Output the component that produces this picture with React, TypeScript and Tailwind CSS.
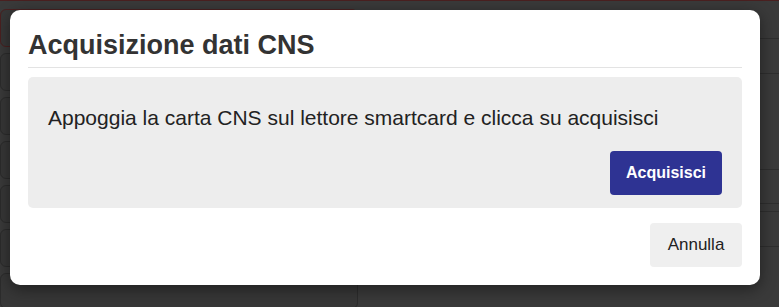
import React from 'react';

const leftRows = [
  { h: 'h-[38px]', border: 'border-[#4a2020]' },
  { h: 'h-[38px]', border: 'border-[#2c2c2c]' },
  { h: 'h-[38px]', border: 'border-[#2c2c2c]' },
  { h: 'h-[38px]', border: 'border-[#2c2c2c]' },
  { h: 'h-[38px]', border: 'border-[#2c2c2c]' },
  { h: 'h-[38px]', border: 'border-[#2c2c2c]' },
];

function Backdrop() {
  return (
    <div className="flex h-full w-full flex-col bg-[#3a3a3a] text-[#1c1c1c]">
      {/* top row of the form behind the modal */}
      <div className="flex h-[13px] items-end overflow-hidden border-b border-[#4a2020] bg-[#333]">
        <div className="flex h-[36px] w-[322px] items-end pb-[4px] pl-[12px] text-[22px] leading-[28px]">
          Rossi
        </div>
        <div className="flex h-[36px] w-[36px] items-end justify-center border-x border-[#4a2020] pb-[4px]">
          <div className="h-[10px] w-[20px] rounded-[2px] bg-[#111]" />
        </div>
        <div className="flex h-[36px] w-[179px] items-end justify-end pb-[4px] pr-[16px] text-[22px] leading-[28px]">
          Nome
        </div>
        <div className="flex h-[36px] flex-1 items-end border-l border-[#4a2020] pb-[4px] pl-[8px] text-[22px] leading-[28px]">
          MARIO
        </div>
      </div>
      <div className="flex flex-1">
        <div className="flex w-[358px] flex-col gap-[6px] pt-[8px]">
          {leftRows.map((r, i) => (
            <div key={i} className={`${r.h} rounded-[6px] border ${r.border} bg-[#373737]`} />
          ))}
          <div className="h-[36px] rounded-[6px] border border-[#2c2c2c] bg-[#373737]" />
        </div>
        <div className="flex flex-1 flex-col">
          <div className="h-[38px] border-b border-[#2e2e2e]" />
          <div className="h-[35px] border-b border-[#2e2e2e]" />
          <div className="h-[96px] border-b border-[#2e2e2e]" />
          <div className="h-[34px] border-b border-[#2e2e2e]" />
          <div className="h-[8px] border-b border-[#2e2e2e]" />
          <div className="h-[35px] border-b border-[#2e2e2e]" />
        </div>
      </div>
    </div>
  );
}

export default function App() {
  return (
    <div className="relative h-[307px] w-[779px] overflow-hidden font-['Liberation_Sans',Arial,sans-serif]">
      <Backdrop />

      <div className="absolute left-[10px] top-[10px] flex w-[750px] flex-col rounded-[10px] bg-white px-[18px] pb-[18px] pt-[20px] shadow-[0_4px_16px_rgba(0,0,0,0.45)]">
        <h2 className="text-[27px] font-bold leading-[31px] text-[#333]">Acquisizione dati CNS</h2>
        <div className="mt-[6px] h-px bg-[#e3e3e3]" />

        <div className="mt-[9px] flex flex-col rounded-[5px] bg-[#ededed] px-[20px] pb-[13px] pt-[27px]">
          <p className="text-[21px] leading-[28px] text-[#222]">
            Appoggia la carta CNS sul lettore smartcard e clicca su acquisisci
          </p>
          <div className="mt-[19px] flex justify-end">
            <button className="h-[44px] w-[112px] rounded-[4px] bg-[#2e3393] text-[16px] font-bold text-white">
              Acquisisci
            </button>
          </div>
        </div>

        <div className="mt-[15px] flex justify-end">
          <button className="h-[44px] w-[92px] rounded-[4px] bg-[#efefef] text-[17px] text-[#222]">
            Annulla
          </button>
        </div>
      </div>
    </div>
  );
}
